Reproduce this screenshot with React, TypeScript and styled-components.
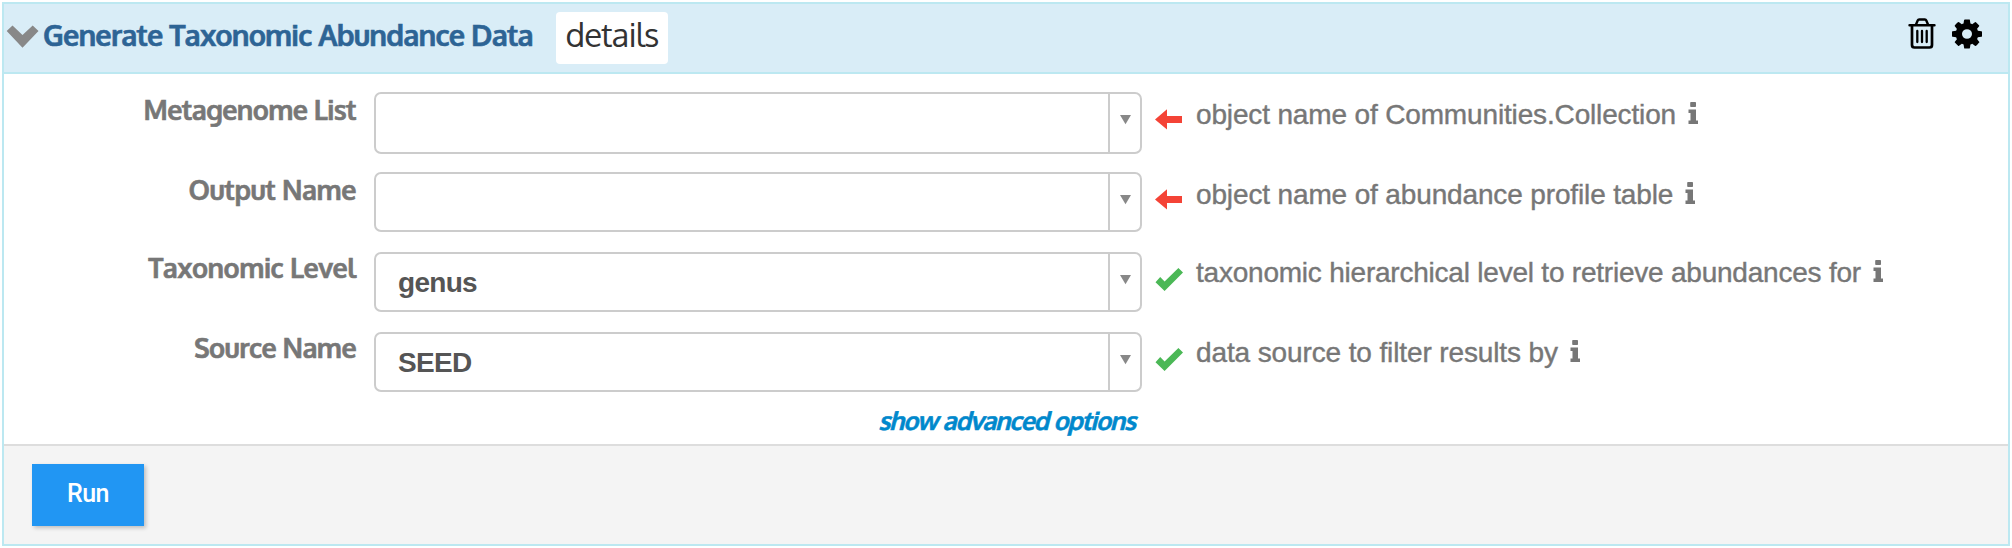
import React from "react";
import styled, { createGlobalStyle } from "styled-components";

const humanist = `"Oxygen", "Noto Sans", "Open Sans", sans-serif`;
const helvetica = `"Liberation Sans", Arial, sans-serif`;

const GlobalStyle = createGlobalStyle`
  * { box-sizing: border-box; }
  body { margin: 0; background: #fff; }
  svg { display: block; flex: none; }
`;

const Panel = styled.section`
  width: 2008px;
  height: 544px;
  margin: 2px;
  border: 2px solid #bce8f1;
  display: flex;
  flex-direction: column;
  background: #fff;
`;

const Header = styled.header`
  height: 70px;
  flex: none;
  display: flex;
  align-items: flex-start;
  background: #d9edf7;
  border-bottom: 2px solid #bce8f1;
  padding: 0 26px 0 2px;
`;

const Chevron = styled.svg`
  margin-top: 20px;
`;

const Title = styled.h1`
  margin: 11px 0 0 4px;
  width: 513px;
  font: 700 29px/40px ${humanist};
  letter-spacing: -0.85px;
  color: #2d6495;
  -webkit-text-stroke: 0.6px #2d6495;
  white-space: nowrap;
`;

const DetailsButton = styled.button`
  width: 112px;
  height: 52px;
  margin-top: 8px;
  padding: 0 0 8px;
  border: 0;
  border-radius: 4px;
  background: #fff;
  font: 400 33px/44px ${humanist};
  letter-spacing: -0.9px;
  color: #333;
`;

const Tools = styled.div`
  margin: 13px 0 0 auto;
  display: flex;
  gap: 16px;
`;

const Form = styled.div`
  flex: none;
  height: 370px;
  padding-top: 18px;
`;

const Row = styled.div<{ $tall?: boolean }>`
  height: ${(p) => (p.$tall ? 62 : 60)}px;
  margin-bottom: ${(p) => (p.$tall ? 18 : 20)}px;
  display: flex;
  align-items: flex-start;
`;

const Label = styled.label<{ $raised?: boolean; $spacing: number }>`
  width: 352px;
  margin-top: ${(p) => (p.$raised ? -4 : -2)}px;
  text-align: right;
  font: 700 27px/38px ${humanist};
  letter-spacing: ${(p) => p.$spacing}px;
  color: #777;
  -webkit-text-stroke: 0.6px #777;
  white-space: nowrap;
`;

const Select = styled.div`
  width: 768px;
  height: 100%;
  margin-left: 18px;
  border: 2px solid #ccc;
  border-radius: 7px;
  display: flex;
  background: #fff;
`;

const Value = styled.span`
  flex: 1;
  padding-left: 22px;
  font: 700 28px/57px ${helvetica};
  letter-spacing: -0.7px;
  color: #555;
`;

const Toggle = styled.span`
  width: 32px;
  border-left: 2px solid #ccc;
  padding: 21px 0 0 10px;
`;

const Status = styled.span`
  width: 54px;
  padding: 16px 0 0 13px;
`;

const Hint = styled.span<{ $raised?: boolean; $spacing: number }>`
  margin-top: ${(p) => (p.$raised ? 5 : 7)}px;
  display: flex;
  gap: 12px;
  font: 400 28px/32px ${helvetica};
  letter-spacing: ${(p) => p.$spacing}px;
  color: #777;
  -webkit-text-stroke: 0.4px #777;
  white-space: nowrap;
`;

const InfoIcon = styled.svg`
  margin-top: 3px;
`;

const AdvancedLink = styled.a`
  display: block;
  width: 1131px;
  margin-top: -10px;
  text-align: right;
  font: italic 700 25px/36px ${humanist};
  letter-spacing: -1.05px;
  color: #08c;
  -webkit-text-stroke: 0.6px #08c;
`;

const Footer = styled.footer`
  flex: 1;
  border-top: 2px solid #ddd;
  background: #f4f4f4;
  padding: 18px 28px;
`;

const RunButton = styled.button`
  width: 112px;
  height: 62px;
  border: 0;
  padding: 0 0 3px;
  background: #2196f3;
  box-shadow: 2px 2px 4px rgba(0, 0, 0, 0.22);
  color: #fff;
  font: 500 25px/56px Roboto, sans-serif;
  letter-spacing: -0.6px;
`;

const Required = () => (
  <svg width="29" height="22" viewBox="0 0 29 22">
    <path d="M0 11.400 12 1.300v6.700h15v7H12v6.500Z" fill="#f44336" />
  </svg>
);

const Valid = () => (
  <svg width="29" height="24" viewBox="0 0 29 24">
    <path d="M.5 14.200 5.200 9l4.400 4.400L23.400 0 28 4.500 9.600 23Z" fill="#4bb856" />
  </svg>
);

const Info = () => (
  <InfoIcon width="11" height="22" viewBox="0 0 11 22">
    <path
      d="M3 0h4.200q.8 0 .8.8v3.400q0 .8-.8.8H3q-.8 0-.8-.8V.8Q2.200 0 3 0ZM.5 7.500H8v11h2v3.500H.5v-3.500h2V11h-2Z"
      fill="#777"
    />
  </InfoIcon>
);

interface Field {
  label: string;
  labelSpacing: number;
  value: string;
  hint: string;
  hintSpacing: number;
  valid: boolean;
}

const fields: Field[] = [
  { label: "Metagenome List", labelSpacing: -0.65, value: "", hint: "object name of Communities.Collection", hintSpacing: -0.15, valid: false },
  { label: "Output Name", labelSpacing: -0.5, value: "", hint: "object name of abundance profile table", hintSpacing: -0.14, valid: false },
  { label: "Taxonomic Level", labelSpacing: -0.5, value: "genus", hint: "taxonomic hierarchical level to retrieve abundances for", hintSpacing: -0.22, valid: true },
  { label: "Source Name", labelSpacing: -0.65, value: "SEED", hint: "data source to filter results by", hintSpacing: -0.12, valid: true },
];

export default function App() {
  return (
    <>
      <GlobalStyle />
      <Panel>
        <Header>
          <Chevron width="33" height="25" viewBox="0 0 33 25">
            <path d="M.7 7 6.500 1.500 16.500 11 26.700 1.500 32.500 7 16.500 23.700Z" fill="#888" />
          </Chevron>
          <Title>Generate Taxonomic Abundance Data</Title>
          <DetailsButton>details</DetailsButton>
          <Tools>
            <svg width="28" height="34" viewBox="0 0 28 34" fill="none" stroke="#000" strokeLinecap="round">
              <path d="M1.500 8.300h25M8 7.500l1.700-4q.4-1 1.500-1h5.600q1.100 0 1.500 1l1.700 4" strokeWidth="2.400" />
              <path d="M4 8.500V28q0 2.500 2.500 2.500h15Q24 30.500 24 28V8.500" strokeWidth="2.700" />
              <path d="M9.300 14v11M14 14v11M18.700 14v11" strokeWidth="2.300" />
            </svg>
            <svg width="30" height="34" viewBox="128 0 1536 1792" preserveAspectRatio="none">
              <path d="M1152 896q0-106-75-181t-181-75-181 75-75 181 75 181 181 75 181-75 75-181zm512-109v222q0 12-8 23t-20 13l-185 28q-19 54-39 91 35 50 107 138 10 12 10 25t-9 23q-27 37-99 108t-94 71q-12 0-26-9l-138-108q-44 23-91 38-16 136-29 186-7 28-36 28h-222q-14 0-24.500-8.500t-11.500-21.500l-28-184q-49-16-90-37l-141 107q-10 9-25 9-14 0-25-11-126-114-165-168-7-10-7-23 0-12 8-23 15-21 51-66.500t54-70.500q-27-50-41-99l-183-27q-13-2-21-12.500t-8-23.500v-222q0-12 8-23t19-13l186-28q14-46 39-92-40-57-107-138-10-12-10-24 0-10 9-23 26-36 98.500-107.500t94.500-71.500q13 0 26 10l138 107q44-23 91-38 16-136 29-186 7-28 36-28h222q14 0 24.500 8.500t11.500 21.500l28 184q49 16 90 37l142-107q9-9 24-9 13 0 25 10 129 119 165 170 7 8 7 22 0 12-8 23-15 21-51 66.500t-54 70.500q26 50 41 98l183 28q13 2 21 12.500t8 23.500z" />
            </svg>
          </Tools>
        </Header>
        <Form>
          {fields.map((f, i) => (
            <Row key={f.label} $tall={i === 0}>
              <Label $raised={f.valid} $spacing={f.labelSpacing}>{f.label}</Label>
              <Select>
                <Value>{f.value}</Value>
                <Toggle>
                  <svg width="11" height="10" viewBox="0 0 11 10">
                    <path d="M0 0h11L5.500 9.300Z" fill="#888" />
                  </svg>
                </Toggle>
              </Select>
              <Status>{f.valid ? <Valid /> : <Required />}</Status>
              <Hint $raised={f.valid} $spacing={f.hintSpacing}>
                {f.hint}
                <Info />
              </Hint>
            </Row>
          ))}
          <AdvancedLink>show advanced options</AdvancedLink>
        </Form>
        <Footer>
          <RunButton>Run</RunButton>
        </Footer>
      </Panel>
    </>
  );
}
